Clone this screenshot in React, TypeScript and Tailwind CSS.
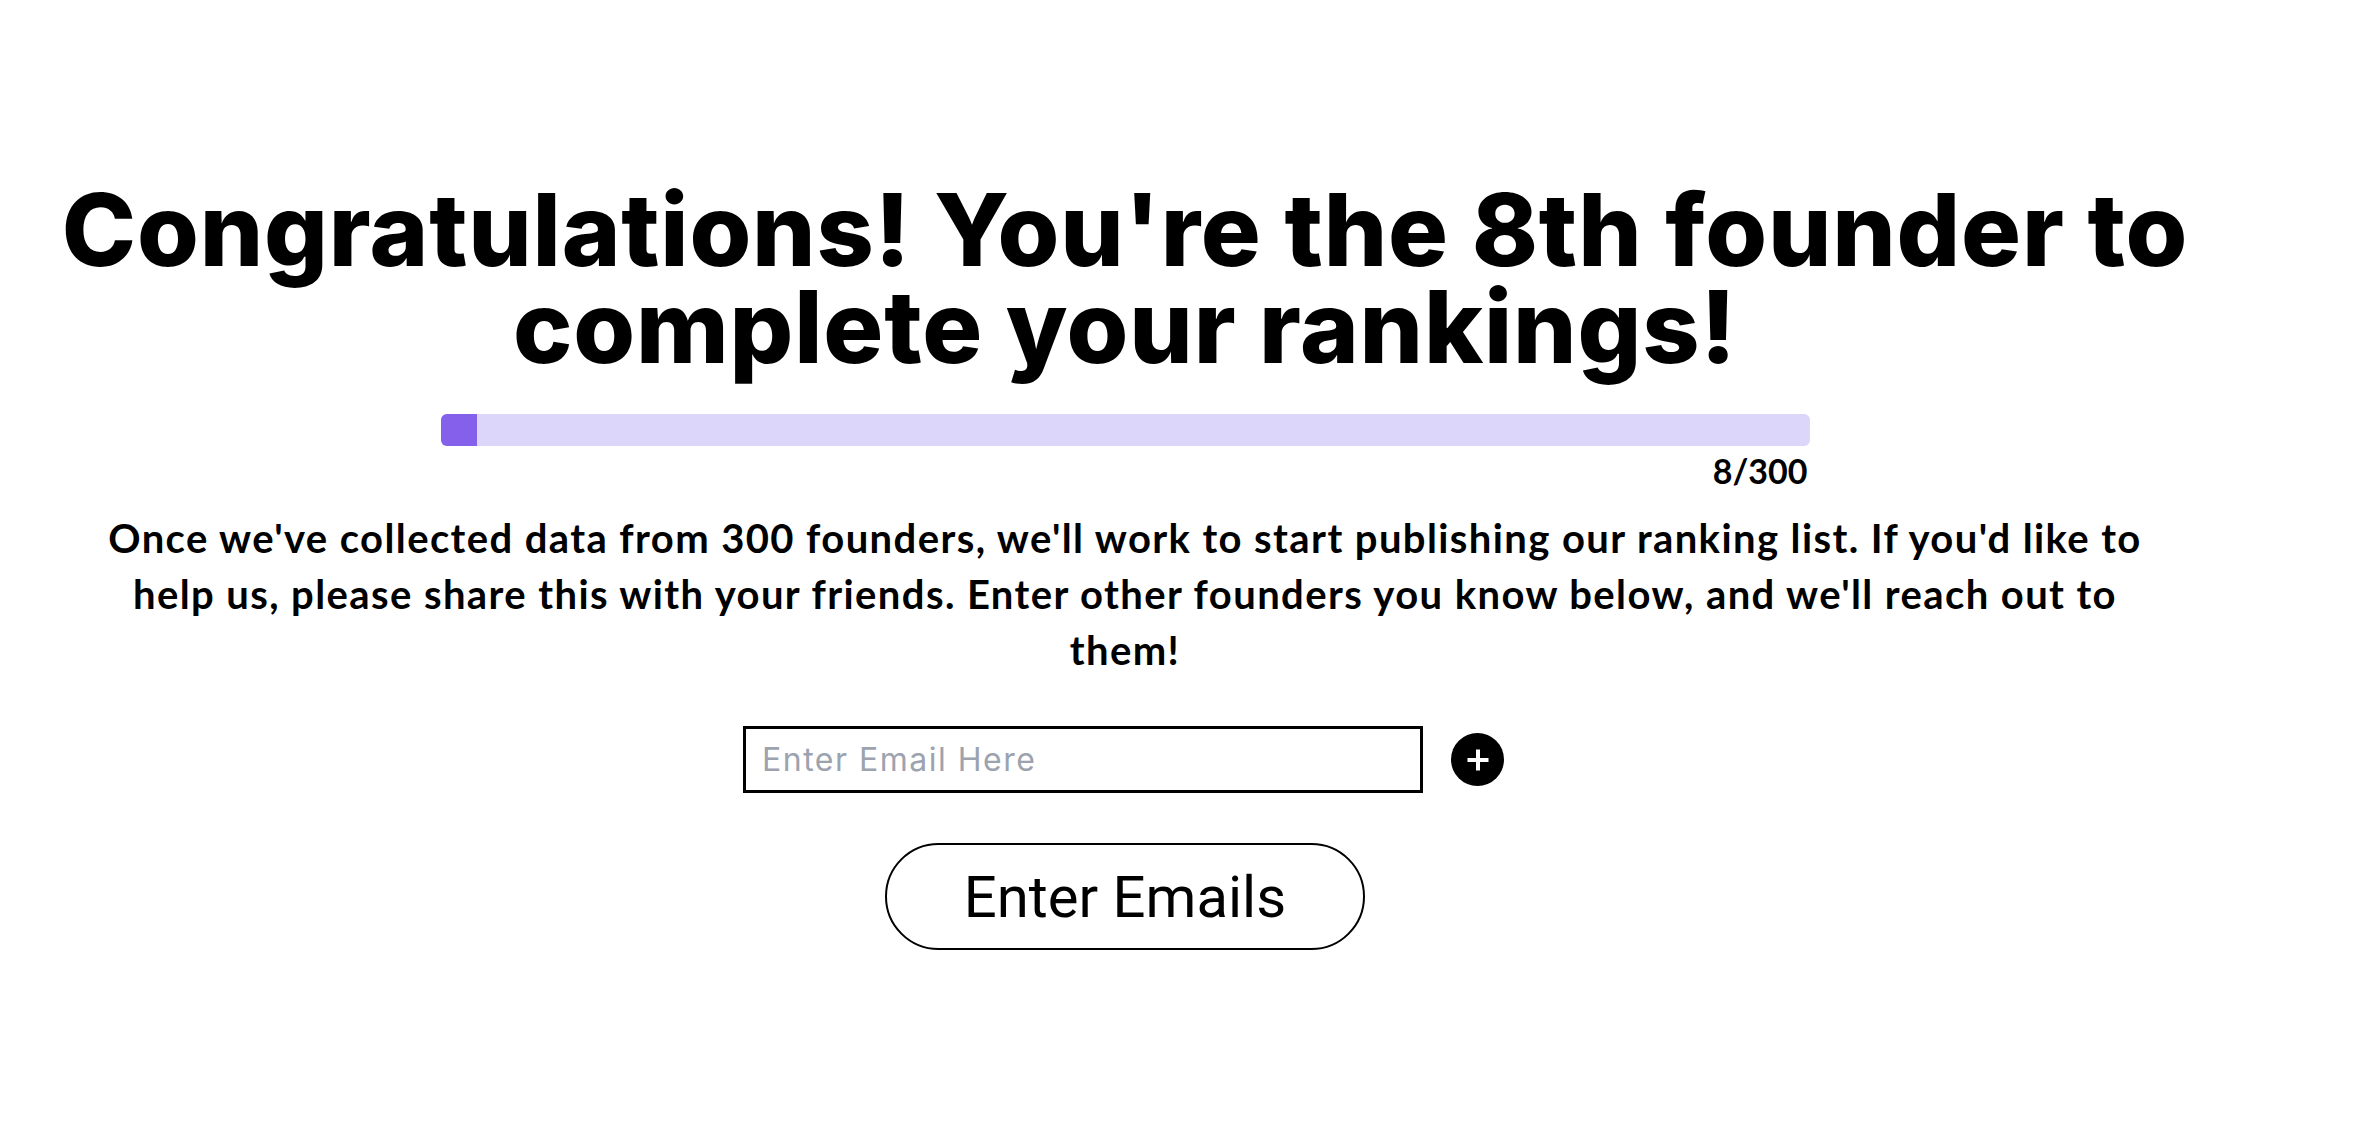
import React from "react";

export default function App() {
  const current = 8;
  const total = 300;
  const pct = (current / total) * 100;
  return (
    <div className="min-h-screen w-full bg-white">
      <div className="w-[2250px] flex flex-col items-center pt-[181px]">
        <h1
          className="text-center text-black font-extrabold text-[100px] leading-[97px] tracking-[0.8px]"
          style={{ fontFamily: "Inter, 'Noto Sans', sans-serif" }}
        >
          Congratulations! You're the 8th founder to
          <br />
          complete your rankings!
        </h1>

        <div className="w-[1369px] mt-[39px]">
          <div className="h-[32px] w-full rounded-[6px] bg-[#dcd6fa] overflow-hidden flex">
            <div className="h-full bg-[#8560ea]" style={{ width: `${pct}%` }} />
          </div>
          <div
            className="text-right text-black font-bold text-[34px] leading-[40px] mt-[5px] pr-[2px]"
            style={{ fontFamily: "Lato, 'Noto Sans', sans-serif" }}
          >
            8/300
          </div>
        </div>

        <p
          className="text-center text-black font-bold text-[40px] leading-[56px] mt-[19px] tracking-[1.4px]"
          style={{ fontFamily: "Lato, 'Noto Sans', sans-serif" }}
        >
          Once we've collected data from 300 founders, we'll work to start publishing our ranking list. If you'd like to
          <br />
          help us, please share this with your friends. Enter other founders you know below, and we'll reach out to
          <br />
          them!
        </p>

        <div className="flex items-center gap-[28px] mt-[48px] pr-[3px]">
          <input
            type="email"
            placeholder="Enter Email Here"
            className="w-[680px] h-[67px] border-[3px] border-black bg-white px-[16px] text-[32px] tracking-[1.5px] text-black placeholder:text-[#9ca3af] outline-none"
            style={{ fontFamily: "Inter, 'Noto Sans', sans-serif" }}
          />
          <button
            type="button"
            aria-label="Add email"
            className="w-[53px] h-[53px] rounded-full bg-black flex items-center justify-center"
          >
            <svg width="24" height="24" viewBox="0 0 24 24" fill="none">
              <path d="M12 1.5v21M1.5 12h21" stroke="white" strokeWidth="4" strokeLinecap="butt" />
            </svg>
          </button>
        </div>

        <button
          type="button"
          className="mt-[50px] w-[480px] h-[107px] rounded-full border-2 border-black bg-white text-black text-[58px] leading-none"
          style={{ fontFamily: "Roboto, 'Liberation Sans', Arial, sans-serif" }}
        >
          Enter Emails
        </button>
      </div>
    </div>
  );
}
